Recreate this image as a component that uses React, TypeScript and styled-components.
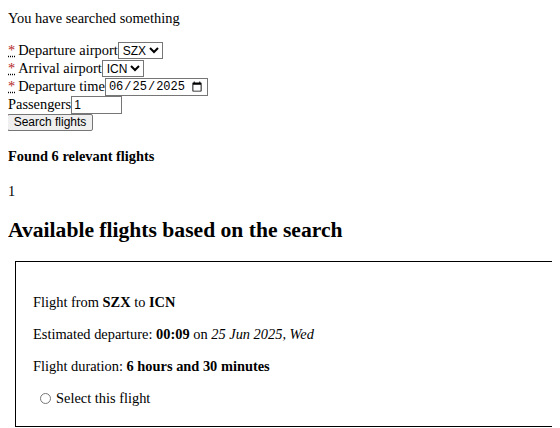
import React from "react";
import styled, { createGlobalStyle } from "styled-components";

const Global = createGlobalStyle`
  html { background: #fff; overflow: hidden; }
  body {
    margin: 8px;
    font-family: "Liberation Serif", "Times New Roman", serif;
    font-size: 14.4px;
    line-height: 16.5px;
    color: #000;
  }
`;

const Status = styled.div`
  padding-top: 2px;
  margin-bottom: 15px;
`;

const Form = styled.form`
  display: flex;
  flex-direction: column;
  align-items: flex-start;
`;

const Row = styled.div`
  display: flex;
  align-items: center;
  height: 18px;
`;

const Req = styled.abbr`
  color: #b3261e;
  text-decoration: underline dotted #000;
  margin-right: 3px;
  cursor: help;
`;

const Label = styled.label`
  white-space: nowrap;
`;

const Select = styled.select<{ $w: number }>`
  font-family: Arial, "Liberation Sans", sans-serif;
  font-size: 12px;
  width: ${(p) => p.$w}px;
  height: 17px;
  padding: 0;
  border: 1px solid #767676;
  border-radius: 0;
  background: #fff;
  color: #000;
`;

const DateInput = styled.input`
  font-family: "Liberation Mono", monospace;
  font-size: 12px;
  height: 18px;
  box-sizing: border-box;
  padding: 0 2px;
  border: 1px solid #767676;
  width: 103px;
`;

const NumberInput = styled.input`
  font-family: Arial, "Liberation Sans", sans-serif;
  font-size: 12px;
  height: 18px;
  box-sizing: border-box;
  width: 51px;
  padding: 0 2px;
  border: 1px solid #767676;
`;

const Button = styled.button`
  font-family: Arial, "Liberation Sans", sans-serif;
  font-size: 12px;
  height: 17px;
  width: 86px;
  padding: 0;
  margin-left: -1px;
  border: 1px solid #767676;
  border-radius: 2px;
  background: #efefef;
  color: #000;
  line-height: 13px;
`;

const Found = styled.h4`
  margin: 17.5px 0 0;
  font-size: 14.4px;
  font-weight: bold;
`;

const Page = styled.p`
  margin: 18px 0 0;
`;

const Title = styled.h2`
  font-size: 21.6px;
  line-height: 25px;
  margin: 18.5px 0 18px;
`;

const Card = styled.div`
  border: 1px solid #000;
  margin-left: 7px;
  min-width: 800px;
  width: 800px;
  padding: 16.5px 17px 3px;
`;

const Line = styled.p`
  margin: 15.5px 0;
  &:first-child { margin-top: 16px; }
`;

const Choice = styled.label`
  display: flex;
  align-items: center;
  margin: 15.5px 0 16px;
`;

const Radio = styled.input`
  margin: 0 5px 0 7px;
  width: 11px;
  height: 11px;
`;

export default function App() {
  return (
    <>
      <Global />
      <Status>You have searched something</Status>
      <Form onSubmit={(e) => e.preventDefault()}>
        <Row>
          <Label>
            <Req title="required">*</Req>Departure airport
          </Label>
          <Select $w={45} defaultValue="SZX">
            <option>SZX</option>
          </Select>
        </Row>
        <Row>
          <Label>
            <Req title="required">*</Req>Arrival airport
          </Label>
          <Select $w={42} defaultValue="ICN">
            <option>ICN</option>
          </Select>
        </Row>
        <Row>
          <Label>
            <Req title="required">*</Req>Departure time
          </Label>
          <DateInput type="date" defaultValue="2025-06-25" />
        </Row>
        <Row>
          <Label>Passengers</Label>
          <NumberInput type="text" defaultValue="1" />
        </Row>
        <Button type="submit">Search flights</Button>
      </Form>
      <Found>Found 6 relevant flights</Found>
      <Page>1</Page>
      <Title>Available flights based on the search</Title>
      <Card>
        <Line>
          Flight from <b>SZX</b> to <b>ICN</b>
        </Line>
        <Line>
          Estimated departure: <b>00:09</b> on <i>25 Jun 2025, Wed</i>
        </Line>
        <Line>
          Flight duration: <b>6 hours and 30 minutes</b>
        </Line>
        <Choice>
          <Radio type="radio" name="flight" />
          Select this flight
        </Choice>
      </Card>
    </>
  );
}
